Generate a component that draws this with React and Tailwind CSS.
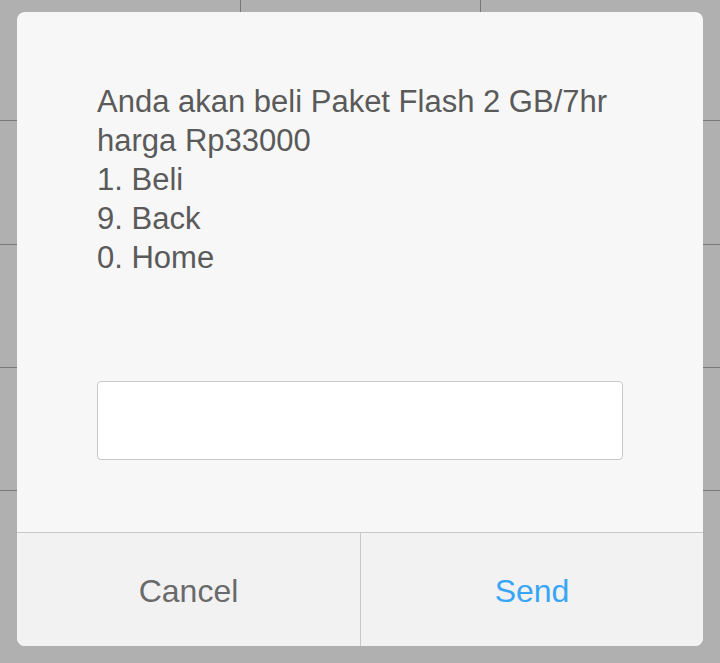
const ROWS = ["h-[123px]", "h-[123px]", "h-[122px]", "h-[122px]", "h-[122px]"];
const LINES = ["Anda akan beli Paket Flash 2 GB/7hr", "harga Rp33000", "1. Beli", "9. Back", "0. Home"];

export default function App() {
  return (
    <div
      className="relative h-[663px] w-[720px] overflow-hidden bg-[#b0b0b0]"
      style={{ fontFamily: '"Liberation Sans", Arial, sans-serif' }}
    >
      {/* home-screen grid behind the dialog */}
      <div className="-mt-[3px] grid grid-cols-[240px_239px_239px] gap-px bg-[#777777]">
        {ROWS.flatMap((h, r) =>
          [0, 1, 2].map((c) => <div key={`${r}-${c}`} className={`${h} bg-[#b0b0b0]`} />)
        )}
      </div>

      {/* ussd dialog */}
      <div className="absolute inset-x-[17px] top-[12px] bottom-[17px] flex flex-col overflow-hidden rounded-[8px] bg-[#f7f7f7]">
        <div className="flex flex-1 flex-col px-[80px] pt-[70px]">
          <div className="text-[31px] leading-[39px] text-[#5a5a5a]">
            {LINES.map((l) => (
              <div key={l}>{l}</div>
            ))}
          </div>
          <div className="mt-[104px] h-[79px] rounded-[4px] border border-[#c8c8c8] bg-white" />
        </div>
        <div className="grid h-[114px] grid-cols-[344px_1fr] border-t border-[#c8c8c8] bg-[#f2f2f2]">
          <button type="button" className="flex items-center justify-center border-r border-[#c8c8c8] pt-[3px] text-[32px] text-[#6a6a6a]">
            Cancel
          </button>
          <button type="button" className="flex items-center justify-center pt-[3px] text-[32px] text-[#37a6f6]">
            Send
          </button>
        </div>
      </div>
    </div>
  );
}
